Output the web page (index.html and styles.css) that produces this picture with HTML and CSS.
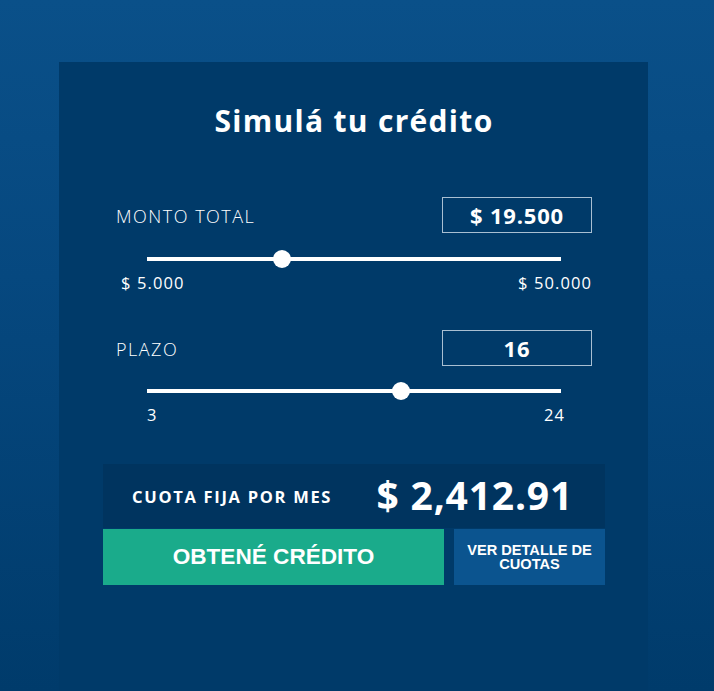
FILE: index.html
```html
<!DOCTYPE html>
<html lang="es">
<head>
<meta charset="utf-8">
<title>Simulá tu crédito</title>
<link rel="stylesheet" href="styles.css">
</head>
<body>
<main class="card">
  <h1 class="title">Simulá tu crédito</h1>

  <section class="field">
    <div class="field-row">
      <span class="field-label">MONTO TOTAL</span>
      <span class="field-value">$ 19.500</span>
    </div>
    <div class="slider">
      <div class="track"></div>
      <div class="thumb" style="left: 32.6%"></div>
    </div>
    <div class="range-labels range-labels--money">
      <span>$ 5.000</span>
      <span>$ 50.000</span>
    </div>
  </section>

  <section class="field field--second">
    <div class="field-row">
      <span class="field-label">PLAZO</span>
      <span class="field-value">16</span>
    </div>
    <div class="slider">
      <div class="track"></div>
      <div class="thumb" style="left: 61.4%"></div>
    </div>
    <div class="range-labels range-labels--term">
      <span>3</span>
      <span>24</span>
    </div>
  </section>

  <section class="result">
    <span class="result-label">CUOTA FIJA POR MES</span>
    <span class="result-value">$ 2,412.91</span>
  </section>
  <div class="actions">
    <a class="btn btn--primary" href="#">OBTENÉ CRÉDITO</a>
    <a class="btn btn--secondary" href="#">VER DETALLE DE CUOTAS</a>
  </div>
</main>
</body>
</html>
```

FILE: styles.css
```css
* { box-sizing: border-box; }

html, body { height: 100%; }

body {
  margin: 0;
  min-height: 691px;
  background: linear-gradient(180deg, #0a5089 0%, #06487f 40%, #003b6b 100%);
  font-family: "Open Sans", "DejaVu Sans", sans-serif;
  color: #ffffff;
  overflow: hidden;
}

.card {
  margin: 62px 0 0 59px;
  width: 589px;
  min-height: 640px;
  background: #003a69;
  padding: 0 56px 0 57px;
}

.title {
  margin: 0;
  padding-top: 40px;
  height: 135px;
  font-size: 30px;
  line-height: 38px;
  font-weight: 700;
  text-align: center;
  letter-spacing: 1.3px;
}

.field-row {
  display: flex;
  justify-content: space-between;
  align-items: center;
  height: 36px;
}

.field-label {
  font-size: 18px;
  font-weight: 300;
  letter-spacing: 1.5px;
  padding-top: 2px;
}

.field-value {
  width: 150px;
  height: 36px;
  border: 1px solid #a9bfd2;
  display: flex;
  align-items: center;
  justify-content: center;
  font-size: 22px;
  font-weight: 700;
  letter-spacing: 0.8px;
}

.slider {
  position: relative;
  height: 18px;
  margin: 17px 31px 0 31px;
}

.track {
  position: absolute;
  left: 0;
  right: 0;
  top: 7px;
  height: 4px;
  background: #ffffff;
}

.thumb {
  position: absolute;
  top: 0;
  width: 18px;
  height: 18px;
  margin-left: -9px;
  border-radius: 50%;
  background: #ffffff;
}

.range-labels {
  display: flex;
  justify-content: space-between;
  height: 20px;
  margin-top: 5px;
  font-size: 16.5px;
  line-height: 20px;
  font-weight: 400;
  letter-spacing: 1.1px;
}

.range-labels--money { padding-left: 5px; }
.range-labels--term { padding: 0 27px 0 31px; }

.field--second { margin-top: 37px; }
.field--second .slider { margin-top: 16px; }
.field--second .range-labels { margin-top: 5px; }

.result {
  margin: 39px -13px 0 -13px;
  height: 64px;
  background: #00345f;
  display: flex;
  align-items: center;
  justify-content: space-between;
  padding: 0 32px 0 29px;
}

.result-label {
  font-size: 16.5px;
  font-weight: 700;
  letter-spacing: 1.7px;
}

.result-value {
  font-size: 39px;
  font-weight: 700;
  letter-spacing: 0.8px;
  margin-bottom: 3px;
}

.actions {
  display: flex;
  gap: 10px;
  margin: 1px -13px 0 -13px;
  height: 56px;
}

.btn {
  display: flex;
  align-items: center;
  justify-content: center;
  text-align: center;
  text-decoration: none;
  color: #ffffff;
  font-family: "Liberation Sans", Arial, sans-serif;
  font-weight: 700;
}

.btn--primary {
  width: 341px;
  background: #1aab8b;
  font-size: 22.6px;
}

.btn--secondary {
  flex: 1;
  background: #0b548f;
  font-size: 14.6px;
  line-height: 14px;
  padding: 0 8px;
}
```
